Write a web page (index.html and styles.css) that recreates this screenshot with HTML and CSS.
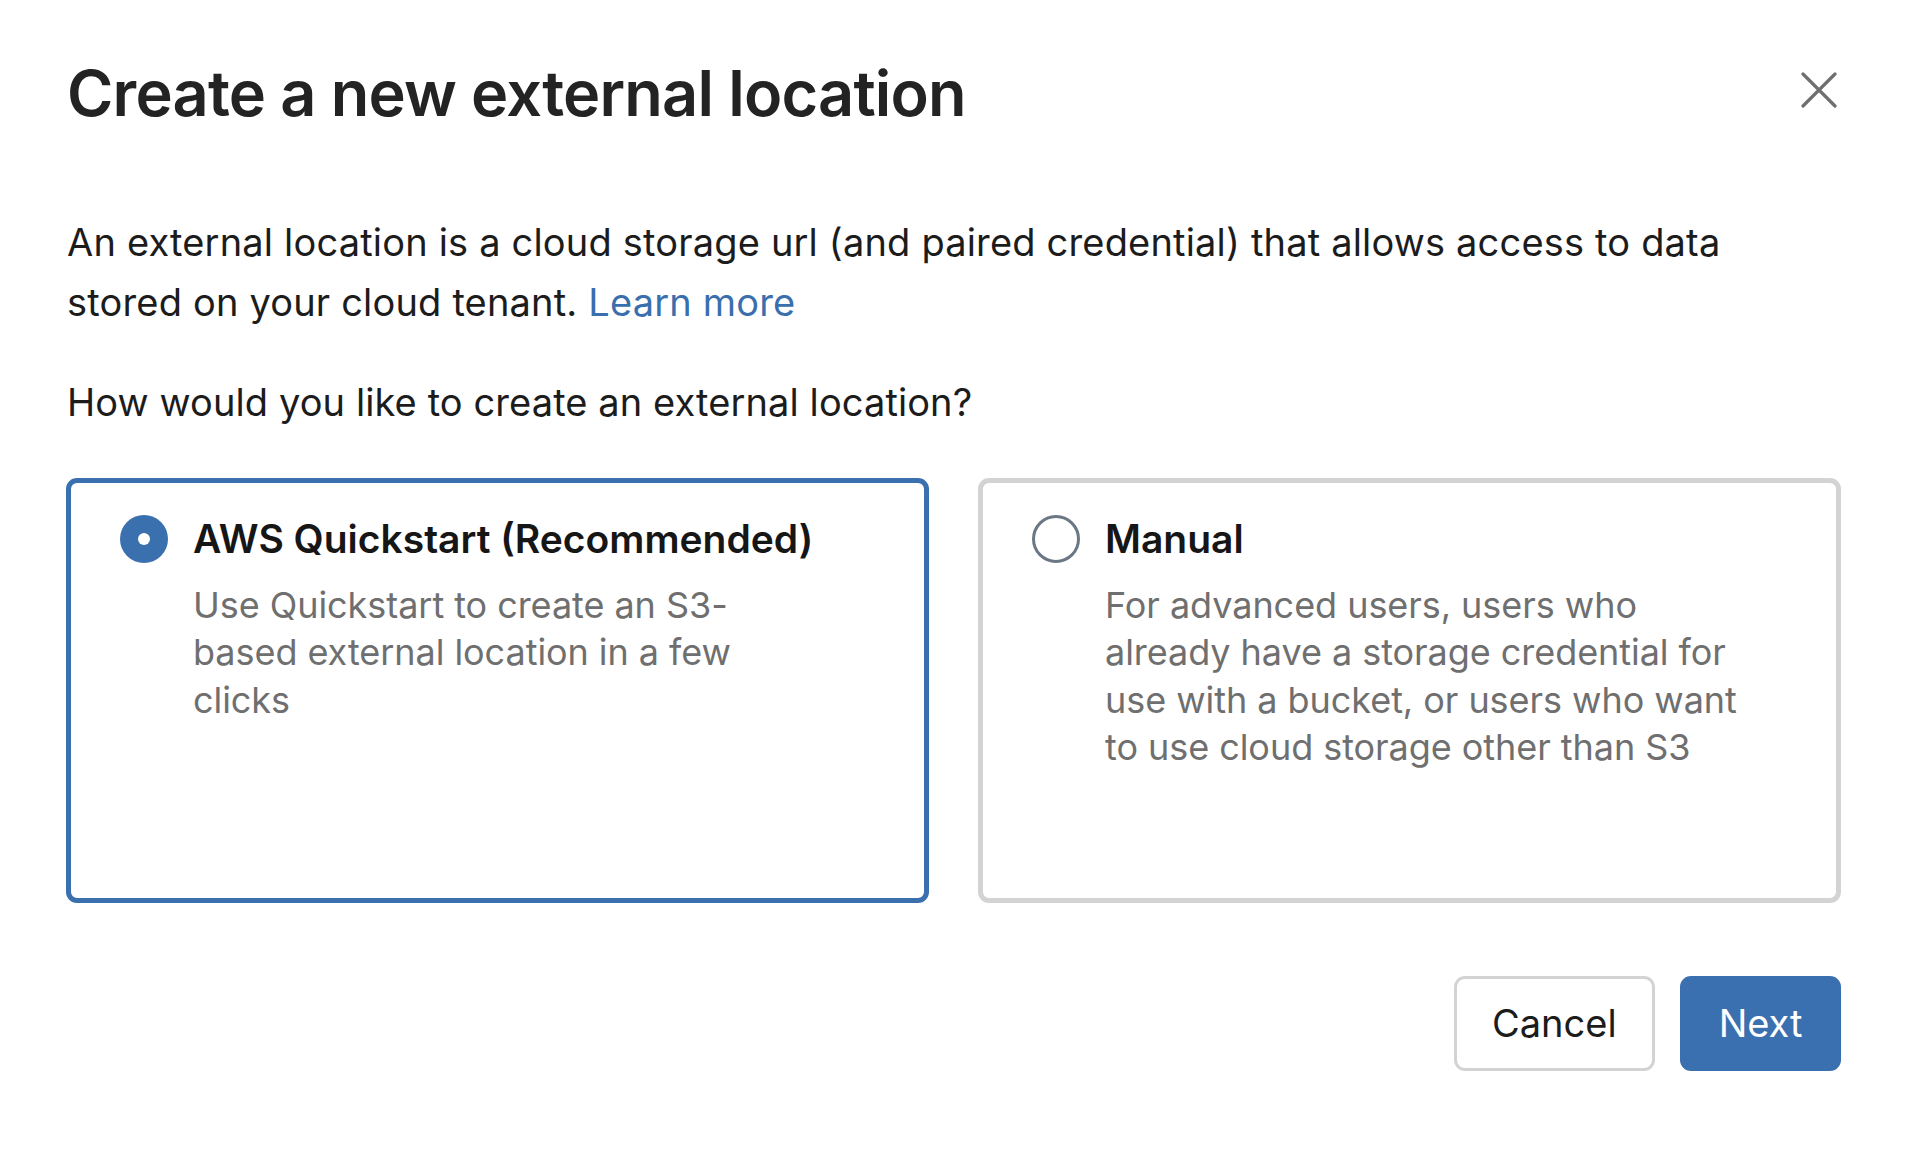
FILE: index.html
```html
<!DOCTYPE html>
<html lang="en">
<head>
<meta charset="utf-8">
<title>Create a new external location</title>
<link rel="stylesheet" href="styles.css">
</head>
<body>
<div class="modal">
  <header class="modal-header">
    <h1 class="modal-title">Create a new external location</h1>
    <button class="close-btn" aria-label="Close">
      <svg width="36" height="36" viewBox="0 0 36 36" aria-hidden="true">
        <path d="M2 2 L34 34 M34 2 L2 34" stroke="#6f6f6f" stroke-width="3.2" stroke-linecap="round" fill="none"/>
      </svg>
    </button>
  </header>

  <p class="intro">An external location is a cloud storage url (and paired credential) that allows access to data stored on your cloud tenant. <a class="link" href="#">Learn more</a></p>

  <p class="question">How would you like to create an external location?</p>

  <div class="options">
    <label class="option option--selected">
      <span class="radio radio--checked"></span>
      <span class="option-body">
        <span class="option-title">AWS Quickstart (Recommended)</span>
        <span class="option-desc">Use Quickstart to create an S3-based external location in a few clicks</span>
      </span>
    </label>
    <label class="option">
      <span class="radio"></span>
      <span class="option-body">
        <span class="option-title">Manual</span>
        <span class="option-desc">For advanced users, users who already have a storage credential for use with a bucket, or users who want to use cloud storage other than S3</span>
      </span>
    </label>
  </div>

  <footer class="modal-footer">
    <button class="btn btn-secondary">Cancel</button>
    <button class="btn btn-primary">Next</button>
  </footer>
</div>
</body>
</html>
```

FILE: styles.css
```css
* {
  box-sizing: border-box;
}

html, body {
  margin: 0;
  padding: 0;
  background: #ffffff;
}

body {
  font-family: Inter, "Noto Sans", "Liberation Sans", sans-serif;
  color: #1c1c1c;
}

.modal {
  width: 1908px;
  padding: 55px 67px 0 66px;
}

.modal-header {
  display: flex;
  justify-content: space-between;
  align-items: flex-start;
}

.modal-title {
  margin: 0;
  font-size: 63px;
  line-height: 76.8px;
  font-weight: 600;
  letter-spacing: -0.8px;
  color: #232323;
  padding-left: 1px;
}

.close-btn {
  margin: 17px 4px 0 0;
  padding: 0;
  border: 0;
  background: transparent;
  width: 36px;
  height: 36px;
  display: flex;
  cursor: pointer;
}

.intro {
  margin: 80px 0 0 0;
  padding-left: 1px;
  max-width: 1720px;
  font-size: 38px;
  line-height: 60px;
  letter-spacing: 0.18px;
  color: #1c1c1c;
}

.link {
  color: #3a6fad;
  text-decoration: none;
}

.question {
  margin: 40px 0 0 0;
  padding-left: 1px;
  font-size: 38px;
  line-height: 60px;
  letter-spacing: 0.1px;
  color: #1c1c1c;
}

.options {
  margin-top: 46px;
  display: grid;
  grid-template-columns: 1fr 1fr;
  gap: 49px;
}

.option {
  height: 425px;
  border: 5px solid #d3d3d3;
  border-radius: 11px;
  padding: 32px 49px;
  display: flex;
  align-items: flex-start;
  gap: 25px;
  cursor: pointer;
}

.option--selected {
  border-color: #3b70ae;
}

.radio {
  flex: 0 0 48px;
  width: 48px;
  height: 48px;
  border-radius: 50%;
  border: 3px solid #6b7785;
  background: #ffffff;
  display: flex;
  align-items: center;
  justify-content: center;
}

.radio--checked {
  border: 0;
  background: #3b70ae;
}

.radio--checked::after {
  content: "";
  width: 12px;
  height: 12px;
  border-radius: 50%;
  background: #ffffff;
}

.option-body {
  display: flex;
  flex-direction: column;
}

.option-title {
  font-size: 39px;
  line-height: 48px;
  font-weight: 600;
  color: #161616;
}

.option-desc {
  margin-top: 19px;
  max-width: 637px;
  font-size: 36px;
  line-height: 47.5px;
  letter-spacing: -0.05px;
  color: #6f6f6f;
}

.modal-footer {
  margin-top: 73px;
  display: flex;
  justify-content: flex-end;
  gap: 25px;
}

.btn {
  height: 95px;
  padding: 0 35.5px;
  border-radius: 11px;
  font-family: Inter, "Noto Sans", "Liberation Sans", sans-serif;
  font-size: 38px;
  font-weight: 400;
  cursor: pointer;
}

.btn-secondary {
  border: 3px solid #d3d3d3;
  background: #ffffff;
  color: #1c1c1c;
}

.btn-primary {
  border: 3px solid #3b70b0;
  background: #3b70b0;
  color: #ffffff;
}
```
